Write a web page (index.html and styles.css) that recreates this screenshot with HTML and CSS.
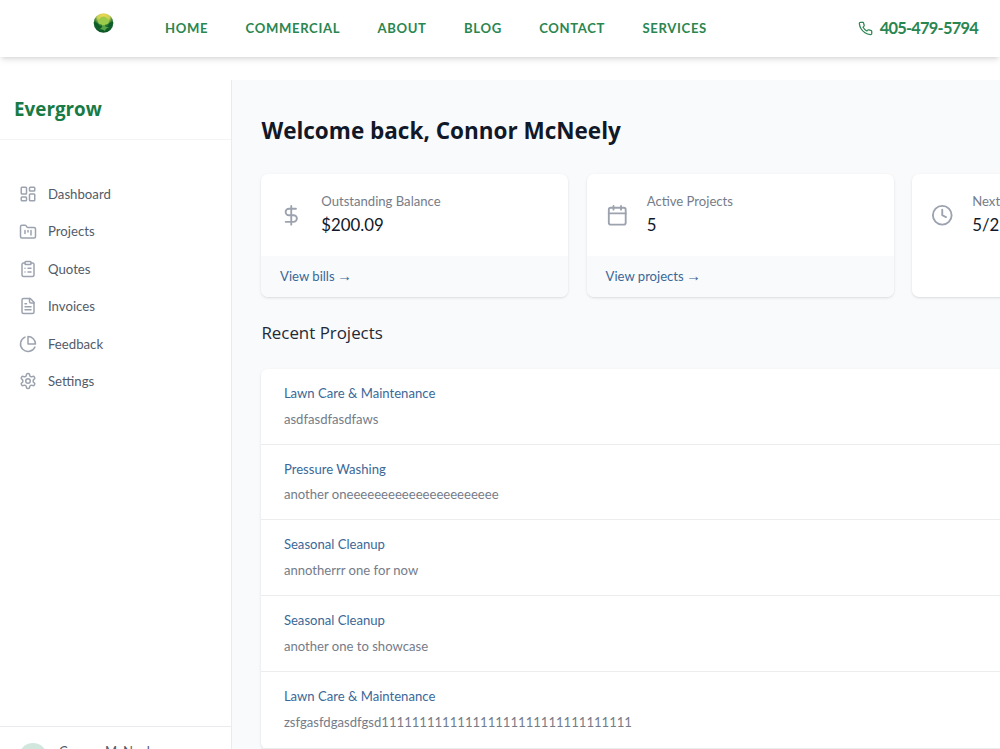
FILE: index.html
```
<!DOCTYPE html>
<html lang="en">
<head>
    <meta charset="UTF-8">
    <meta name="viewport" content="width=device-width, initial-scale=1.0">
    <title>Evergrow - Dashboard</title>
    <link rel="stylesheet" href="styles.css">
</head>
<body>
    <header class="topbar">
        <a class="logo" href="#">
            <svg viewBox="0 0 20 20">
                <defs>
                    <radialGradient id="sun" cx="50%" cy="15%" r="80%">
                        <stop offset="0" stop-color="#f3d94c"/>
                        <stop offset="0.4" stop-color="#c3cf5a"/>
                        <stop offset="0.6" stop-color="#2c7a35"/>
                        <stop offset="1" stop-color="#0c5527"/>
                    </radialGradient>
                </defs>
                <circle cx="10" cy="10" r="9.8" fill="url(#sun)"/>
                <path d="M.3 9c2 0 4 1.500 6 4l4 1 4-1c1-3 3-4.500 5.500-4a9.800 9.800 0 0 1-19.500 0z" fill="#0d5c2a"/>
                <path d="M10 3.500c2 0 3 1 3.400 2 1.800.3 2.600 2 1.800 3.400 0 1.800-1.700 2.500-3.200 2.300l-1 1.800H9l-1-1.800c-1.800.2-3.200-.8-3.200-2.300-.8-1.500.2-3 1.800-3.400.5-1.200 1.600-2 3.400-2z" fill="#9ccb4b"/>
                <path d="M9 12h2c.5 1.500 2 2 5 2.500-2.500.3-4 1-4.500 3.500-1.500-1.500-3.500-2-6-1.800C8 15.500 9 14 9 12z" fill="#58a548"/>
            </svg>
        </a>
        <nav class="main-nav">
            <a href="#">HOME</a>
            <a href="#">COMMERCIAL</a>
            <a href="#">ABOUT</a>
            <a href="#">BLOG</a>
            <a href="#">CONTACT</a>
            <a href="#">SERVICES</a>
        </nav>
        <a class="phone" href="#">
            <svg class="icon" viewBox="0 0 24 24"><path d="M22 16.920v3a2 2 0 0 1-2.180 2 19.790 19.790 0 0 1-8.630-3.070 19.500 19.500 0 0 1-6-6 19.790 19.790 0 0 1-3.070-8.670A2 2 0 0 1 4.110 2h3a2 2 0 0 1 2 1.720c.127.96.361 1.903.7 2.810a2 2 0 0 1-.45 2.110L8.090 9.910a16 16 0 0 0 6 6l1.270-1.270a2 2 0 0 1 2.110-.45c.907.339 1.850.573 2.810.7A2 2 0 0 1 22 16.920z"/></svg>
            <span>405-479-5794</span>
        </a>
    </header>

    <div class="layout">
        <aside class="sidebar">
            <div class="brand">Evergrow</div>
            <nav class="side-nav">
                <a href="#">
                    <svg class="icon" viewBox="0 0 24 24"><rect x="3" y="3" width="7" height="9" rx="1"/><rect x="14" y="3" width="7" height="5" rx="1"/><rect x="14" y="12" width="7" height="9" rx="1"/><rect x="3" y="16" width="7" height="5" rx="1"/></svg>
                    <span>Dashboard</span>
                </a>
                <a href="#">
                    <svg class="icon" viewBox="0 0 24 24"><path d="M4 20h16a2 2 0 0 0 2-2V8a2 2 0 0 0-2-2h-7.930a2 2 0 0 1-1.660-.9l-.82-1.200A2 2 0 0 0 7.930 3H4a2 2 0 0 0-2 2v13c0 1.100.9 2 2 2z"/><path d="M8 10v4M12 10v2M16 10v6"/></svg>
                    <span>Projects</span>
                </a>
                <a href="#">
                    <svg class="icon" viewBox="0 0 24 24"><rect x="8" y="2" width="8" height="4" rx="1"/><path d="M16 4h2a2 2 0 0 1 2 2v14a2 2 0 0 1-2 2H6a2 2 0 0 1-2-2V6a2 2 0 0 1 2-2h2M12 11h4M12 16h4M8 11h.01M8 16h.01"/></svg>
                    <span>Quotes</span>
                </a>
                <a href="#">
                    <svg class="icon" viewBox="0 0 24 24"><path d="M15 2H6a2 2 0 0 0-2 2v16a2 2 0 0 0 2 2h12a2 2 0 0 0 2-2V7z"/><path d="M14 2v4a2 2 0 0 0 2 2h4M10 9H8M16 13H8M16 17H8"/></svg>
                    <span>Invoices</span>
                </a>
                <a href="#">
                    <svg class="icon" viewBox="0 0 24 24"><path d="M21.210 15.890A10 10 0 1 1 8 2.830"/><path d="M22 12A10 10 0 0 0 12 2v10z"/></svg>
                    <span>Feedback</span>
                </a>
                <a href="#">
                    <svg class="icon" viewBox="0 0 24 24"><path d="M12.220 2h-.44a2 2 0 0 0-2 2v.18a2 2 0 0 1-1 1.730l-.43.25a2 2 0 0 1-2 0l-.15-.08a2 2 0 0 0-2.730.73l-.22.38a2 2 0 0 0 .73 2.730l.15.1a2 2 0 0 1 1 1.720v.51a2 2 0 0 1-1 1.740l-.15.09a2 2 0 0 0-.73 2.730l.22.38a2 2 0 0 0 2.730.73l.15-.08a2 2 0 0 1 2 0l.43.25a2 2 0 0 1 1 1.730V20a2 2 0 0 0 2 2h.44a2 2 0 0 0 2-2v-.18a2 2 0 0 1 1-1.730l.43-.25a2 2 0 0 1 2 0l.15.08a2 2 0 0 0 2.730-.73l.22-.39a2 2 0 0 0-.73-2.730l-.15-.08a2 2 0 0 1-1-1.740v-.5a2 2 0 0 1 1-1.740l.15-.09a2 2 0 0 0 .73-2.730l-.22-.38a2 2 0 0 0-2.730-.73l-.15.08a2 2 0 0 1-2 0l-.43-.25a2 2 0 0 1-1-1.730V4a2 2 0 0 0-2-2z"/><circle cx="12" cy="12" r="3"/></svg>
                    <span>Settings</span>
                </a>
            </nav>
            <div class="user">
                <span class="avatar"></span>
                <span class="user-name">Connor McNeely</span>
            </div>
        </aside>

        <main class="content">
            <h1>Welcome back, Connor McNeely</h1>

            <div class="stats">
                <div class="stat">
                    <div class="stat-body">
                        <svg class="icon" viewBox="0 0 24 24"><path d="M12 2v20M17 5H9.500a3.500 3.500 0 0 0 0 7h5a3.500 3.500 0 0 1 0 7H6"/></svg>
                        <div>
                            <p class="stat-label">Outstanding Balance</p>
                            <p class="stat-value">$200.09</p>
                        </div>
                    </div>
                    <div class="stat-footer"><a href="#">View bills <span class="arrow">→</span></a></div>
                </div>
                <div class="stat">
                    <div class="stat-body">
                        <svg class="icon" viewBox="0 0 24 24"><rect x="3" y="4" width="18" height="18" rx="2"/><path d="M8 2v4M16 2v4M3 10h18"/></svg>
                        <div>
                            <p class="stat-label">Active Projects</p>
                            <p class="stat-value">5</p>
                        </div>
                    </div>
                    <div class="stat-footer"><a href="#">View projects <span class="arrow">→</span></a></div>
                </div>
                <div class="stat">
                    <div class="stat-body">
                        <svg class="icon" viewBox="0 0 24 24"><circle cx="12" cy="12" r="10"/><path d="M12 6v6l4 2"/></svg>
                        <div>
                            <p class="stat-label">Next</p>
                            <p class="stat-value">5/2</p>
                        </div>
                    </div>
                </div>
            </div>

            <h2>Recent Projects</h2>

            <ul class="projects">
                <li>
                    <a href="#">Lawn Care &amp; Maintenance</a>
                    <p>asdfasdfasdfaws</p>
                </li>
                <li>
                    <a href="#">Pressure Washing</a>
                    <p>another oneeeeeeeeeeeeeeeeeeeeee</p>
                </li>
                <li>
                    <a href="#">Seasonal Cleanup</a>
                    <p>annotherrr one for now</p>
                </li>
                <li>
                    <a href="#">Seasonal Cleanup</a>
                    <p>another one to showcase</p>
                </li>
                <li>
                    <a href="#">Lawn Care &amp; Maintenance</a>
                    <p>zsfgasfdgasdfgsd111111111111111111111111111111111</p>
                </li>
            </ul>
        </main>
    </div>
</body>
</html>
```
FILE: styles.css
```
* {
    margin: 0;
    padding: 0;
    box-sizing: border-box;
}

body {
    font-family: Lato, sans-serif;
    font-size: 13.1px;
    line-height: 18.7px;
    color: #525b69;
    background: #fff;
    height: 749px;
    overflow: hidden;
}

a {
    color: inherit;
    text-decoration: none;
}

.icon {
    display: block;
    flex-shrink: 0;
    fill: none;
    stroke: currentColor;
    stroke-width: 2;
    stroke-linecap: round;
    stroke-linejoin: round;
}

/* Top bar */
.topbar {
    display: flex;
    align-items: center;
    height: 57px;
    padding: 0 22px 0 93px;
    color: #2a8650;
    box-shadow: 0 4px 6px -1px rgba(0, 0, 0, 0.1), 0 2px 4px -2px rgba(0, 0, 0, 0.1);
}

.logo {
    margin-bottom: 11px;
}

.logo svg {
    display: block;
    width: 21px;
    height: 20px;
}

.main-nav {
    display: flex;
    gap: 37.4px;
    margin-left: 51px;
    font-weight: bold;
    letter-spacing: 0.65px;
}

.phone {
    display: flex;
    align-items: center;
    gap: 7px;
    margin-left: auto;
    font-size: 16.4px;
    font-weight: bold;
    letter-spacing: -0.75px;
}

.phone .icon {
    width: 15px;
    height: 15px;
}

/* Sidebar */
.layout {
    display: flex;
    height: 692px;
    padding-top: 23px;
}

.sidebar {
    display: flex;
    flex-direction: column;
    flex-shrink: 0;
    width: 232px;
    border-right: 1px solid #e9ebee;
}

.brand {
    height: 60px;
    padding-left: 14.1px;
    border-bottom: 1px solid #f3f4f6;
    font: bold 18.8px/59px "Open Sans", sans-serif;
    color: #187a44;
}

.side-nav {
    flex: 1;
    padding: 35.6px 18.7px;
}

.side-nav a {
    display: flex;
    align-items: center;
    gap: 11.3px;
    height: 37.4px;
    font-size: 13.2px;
}

.side-nav .icon {
    width: 18px;
    height: 18px;
    color: #9ca3af;
}

.user {
    display: flex;
    gap: 12px;
    height: 23px;
    padding: 16px 19px 0;
    border-top: 1px solid #e9ebee;
    overflow: hidden;
}

.user-name {
    margin-top: -1px;
}

.avatar {
    flex-shrink: 0;
    width: 28px;
    height: 28px;
    border-radius: 50%;
    background: #d1e7dd;
}

/* Dashboard */
.content {
    flex: 1;
    min-width: 0;
    padding: 35px 0 0 29.4px;
    background: #f9fafb;
    overflow: hidden;
}

.content h1 {
    font: bold 22.5px/32px "Open Sans", sans-serif;
    color: #111827;
}

.stats {
    display: grid;
    grid-template-columns: repeat(3, 306.7px);
    gap: 18.8px;
    margin-top: 27px;
}

.stat {
    height: 123px;
    border-radius: 7px;
    background: #fff;
    box-shadow: 0 1px 3px rgba(0, 0, 0, 0.1), 0 1px 2px -1px rgba(0, 0, 0, 0.1);
    overflow: hidden;
}

.stat-body {
    display: flex;
    align-items: center;
    gap: 18.7px;
    height: 82px;
    padding: 0 18.7px;
}

.stat-body .icon {
    width: 22.5px;
    height: 22.5px;
    color: #9ca3af;
}

.stat-label {
    color: #757c89;
}

.stat-value {
    font-size: 16.8px;
    line-height: 27px;
    color: #111827;
}

.stat-footer {
    height: 41px;
    padding: 11px 18.7px;
    background: #f9fafb;
    color: #3a6898;
}

.arrow {
    margin-left: -1px;
    font-family: "Liberation Serif", serif;
    font-size: 15px;
    line-height: 1;
}

.content h2 {
    margin: 22.5px 0 23.5px;
    font: 16.9px/26px "Open Sans", sans-serif;
    color: #1f2937;
}

/* the list runs on past the right edge */
.projects {
    width: 957.7px;
    list-style: none;
    border-radius: 6px;
    background: #fff;
    box-shadow: 0 1px 3px rgba(0, 0, 0, 0.1), 0 1px 2px -1px rgba(0, 0, 0, 0.1);
}

.projects li {
    height: 75.7px;
    padding: 15px 22.5px;
    border-bottom: 1px solid #ebedef;
}

.projects li:last-child {
    height: 77px;
}

.projects a {
    display: block;
    color: #3a6898;
}

.projects p {
    margin-top: 7.1px;
    color: #757c89;
}
```
